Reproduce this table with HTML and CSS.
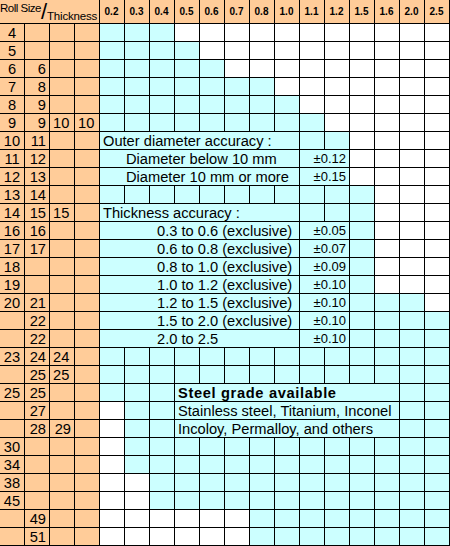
FILE: index.html
```html
<!DOCTYPE html>
<html lang="en">
<head>
<meta charset="utf-8">
<title>Roll size / thickness</title>
<link rel="stylesheet" href="styles.css">
</head>
<body>
<div class="sheet">
  <div class="corner"><span class="roll">Roll Size</span><span class="slash">/</span><span class="thick">Thickness</span></div>
  <div class="h">0.2</div><div class="h">0.3</div><div class="h">0.4</div><div class="h">0.5</div><div class="h">0.6</div><div class="h">0.7</div><div class="h">0.8</div><div class="h">1.0</div><div class="h">1.1</div><div class="h">1.2</div><div class="h">1.5</div><div class="h">1.6</div><div class="h">2.0</div><div class="h">2.5</div>

  <div class="o k1">4</div><div class="o"></div><div class="o"></div><div class="o"></div>
  <div class="c"></div><div class="c"></div><div class="c"></div><div class="w"></div><div class="w"></div><div class="w"></div><div class="w"></div><div class="w"></div><div class="w"></div><div class="w"></div><div class="w"></div><div class="w"></div><div class="w"></div><div class="w"></div>

  <div class="o k1">5</div><div class="o"></div><div class="o"></div><div class="o"></div>
  <div class="c"></div><div class="c"></div><div class="c"></div><div class="c"></div><div class="w"></div><div class="w"></div><div class="w"></div><div class="w"></div><div class="w"></div><div class="w"></div><div class="w"></div><div class="w"></div><div class="w"></div><div class="w"></div>

  <div class="o k1">6</div><div class="o k2">6</div><div class="o"></div><div class="o"></div>
  <div class="c"></div><div class="c"></div><div class="c"></div><div class="c"></div><div class="c"></div><div class="w"></div><div class="w"></div><div class="w"></div><div class="w"></div><div class="w"></div><div class="w"></div><div class="w"></div><div class="w"></div><div class="w"></div>

  <div class="o k1">7</div><div class="o k2">8</div><div class="o"></div><div class="o"></div>
  <div class="c"></div><div class="c"></div><div class="c"></div><div class="c"></div><div class="c"></div><div class="c"></div><div class="c"></div><div class="w"></div><div class="w"></div><div class="w"></div><div class="w"></div><div class="w"></div><div class="w"></div><div class="w"></div>

  <div class="o k1">8</div><div class="o k2">9</div><div class="o"></div><div class="o"></div>
  <div class="c"></div><div class="c"></div><div class="c"></div><div class="c"></div><div class="c"></div><div class="c"></div><div class="c"></div><div class="c"></div><div class="w"></div><div class="w"></div><div class="w"></div><div class="w"></div><div class="w"></div><div class="w"></div>

  <div class="o k1">9</div><div class="o k2">9</div><div class="o k3">10</div><div class="o k3">10</div>
  <div class="c"></div><div class="c"></div><div class="c"></div><div class="c"></div><div class="c"></div><div class="c"></div><div class="c"></div><div class="c"></div><div class="c"></div><div class="w"></div><div class="w"></div><div class="w"></div><div class="w"></div><div class="w"></div>

  <div class="o k1">10</div><div class="o k2">11</div><div class="o"></div><div class="o"></div>
  <div class="note">Outer diameter accuracy :</div><div class="c"></div><div class="c"></div><div class="w"></div><div class="w"></div><div class="w"></div><div class="w"></div>

  <div class="o k1">11</div><div class="o k2">12</div><div class="o"></div><div class="o"></div>
  <div class="note in1">Diameter below 10 mm</div><div class="val">±0.12</div><div class="w"></div><div class="w"></div><div class="w"></div><div class="w"></div>

  <div class="o k1">12</div><div class="o k2">13</div><div class="o"></div><div class="o"></div>
  <div class="note in1">Diameter 10 mm or more</div><div class="val">±0.15</div><div class="w"></div><div class="w"></div><div class="w"></div><div class="w"></div>

  <div class="o k1">13</div><div class="o k2">14</div><div class="o"></div><div class="o"></div>
  <div class="c"></div><div class="c"></div><div class="c"></div><div class="c"></div><div class="c"></div><div class="c"></div><div class="c"></div><div class="c"></div><div class="c"></div><div class="c"></div><div class="c"></div><div class="w"></div><div class="w"></div><div class="w"></div>

  <div class="o k1">14</div><div class="o k2">15</div><div class="o k3">15</div><div class="o"></div>
  <div class="note">Thickness accuracy :</div><div class="c"></div><div class="c"></div><div class="c"></div><div class="w"></div><div class="w"></div><div class="w"></div>

  <div class="o k1">16</div><div class="o k2">16</div><div class="o"></div><div class="o"></div>
  <div class="note in2">0.3 to 0.6 (exclusive)</div><div class="val">±0.05</div><div class="c"></div><div class="w"></div><div class="w"></div><div class="w"></div>

  <div class="o k1">17</div><div class="o k2">17</div><div class="o"></div><div class="o"></div>
  <div class="note in2">0.6 to 0.8 (exclusive)</div><div class="val">±0.07</div><div class="c"></div><div class="w"></div><div class="w"></div><div class="w"></div>

  <div class="o k1">18</div><div class="o"></div><div class="o"></div><div class="o"></div>
  <div class="note in2">0.8 to 1.0 (exclusive)</div><div class="val">±0.09</div><div class="c"></div><div class="w"></div><div class="w"></div><div class="w"></div>

  <div class="o k1">19</div><div class="o"></div><div class="o"></div><div class="o"></div>
  <div class="note in2">1.0 to 1.2 (exclusive)</div><div class="val">±0.10</div><div class="c"></div><div class="w"></div><div class="w"></div><div class="w"></div>

  <div class="o k1">20</div><div class="o k2">21</div><div class="o"></div><div class="o"></div>
  <div class="note in2">1.2 to 1.5 (exclusive)</div><div class="val">±0.10</div><div class="c"></div><div class="c"></div><div class="c"></div><div class="w"></div>

  <div class="o"></div><div class="o k2">22</div><div class="o"></div><div class="o"></div>
  <div class="note in2">1.5 to 2.0 (exclusive)</div><div class="val">±0.10</div><div class="c"></div><div class="c"></div><div class="c"></div><div class="c"></div>

  <div class="o"></div><div class="o k2">22</div><div class="o"></div><div class="o"></div>
  <div class="note in2">2.0 to 2.5</div><div class="val">±0.10</div><div class="c"></div><div class="c"></div><div class="c"></div><div class="c"></div>

  <div class="o k1">23</div><div class="o k2">24</div><div class="o k3">24</div><div class="o"></div>
  <div class="c"></div><div class="c"></div><div class="c"></div><div class="c"></div><div class="c"></div><div class="c"></div><div class="c"></div><div class="c"></div><div class="c"></div><div class="c"></div><div class="c"></div><div class="c"></div><div class="c"></div><div class="c"></div>

  <div class="o"></div><div class="o k2">25</div><div class="o k3">25</div><div class="o"></div>
  <div class="c"></div><div class="c"></div><div class="c"></div><div class="c"></div><div class="c"></div><div class="c"></div><div class="c"></div><div class="c"></div><div class="c"></div><div class="c"></div><div class="c"></div><div class="c"></div><div class="c"></div><div class="c"></div>

  <div class="o k1">25</div><div class="o k2">25</div><div class="o"></div><div class="o"></div>
  <div class="c"></div><div class="c"></div><div class="c"></div><div class="grade bold">Steel grade available</div><div class="c"></div><div class="c"></div>

  <div class="o"></div><div class="o k2">27</div><div class="o"></div><div class="o"></div>
  <div class="w"></div><div class="c"></div><div class="c"></div><div class="grade">Stainless steel, Titanium, Inconel</div><div class="c"></div><div class="c"></div>

  <div class="o"></div><div class="o k2">28</div><div class="o rt">29</div><div class="o"></div>
  <div class="w"></div><div class="c"></div><div class="c"></div><div class="grade">Incoloy, Permalloy, and others</div><div class="c"></div><div class="c"></div>

  <div class="o k1">30</div><div class="o"></div><div class="o"></div><div class="o"></div>
  <div class="w"></div><div class="c"></div><div class="c"></div><div class="c"></div><div class="c"></div><div class="c"></div><div class="c"></div><div class="c"></div><div class="c"></div><div class="c"></div><div class="c"></div><div class="c"></div><div class="c"></div><div class="c"></div>

  <div class="o k1">34</div><div class="o"></div><div class="o"></div><div class="o"></div>
  <div class="w"></div><div class="c"></div><div class="c"></div><div class="c"></div><div class="c"></div><div class="c"></div><div class="c"></div><div class="c"></div><div class="c"></div><div class="c"></div><div class="c"></div><div class="c"></div><div class="c"></div><div class="c"></div>

  <div class="o k1">38</div><div class="o"></div><div class="o"></div><div class="o"></div>
  <div class="w"></div><div class="w"></div><div class="c"></div><div class="c"></div><div class="c"></div><div class="c"></div><div class="c"></div><div class="c"></div><div class="c"></div><div class="c"></div><div class="c"></div><div class="c"></div><div class="c"></div><div class="c"></div>

  <div class="o k1">45</div><div class="o"></div><div class="o"></div><div class="o"></div>
  <div class="w"></div><div class="w"></div><div class="c"></div><div class="c"></div><div class="c"></div><div class="c"></div><div class="c"></div><div class="c"></div><div class="c"></div><div class="c"></div><div class="c"></div><div class="c"></div><div class="c"></div><div class="c"></div>

  <div class="o"></div><div class="o k2">49</div><div class="o"></div><div class="o"></div>
  <div class="w"></div><div class="w"></div><div class="w"></div><div class="w"></div><div class="w"></div><div class="w"></div><div class="c"></div><div class="c"></div><div class="c"></div><div class="c"></div><div class="c"></div><div class="c"></div><div class="c"></div><div class="c"></div>

  <div class="o"></div><div class="o k2">51</div><div class="o"></div><div class="o"></div>
  <div class="w"></div><div class="w"></div><div class="w"></div><div class="w"></div><div class="w"></div><div class="w"></div><div class="c"></div><div class="c"></div><div class="c"></div><div class="c"></div><div class="c"></div><div class="c"></div><div class="c"></div><div class="c"></div>
</div>
</body>
</html>
```

FILE: styles.css
```css
* { box-sizing: border-box; }

html, body {
  margin: 0;
  padding: 0;
  background: #ffffff;
}

body {
  font-family: "Liberation Sans", Arial, sans-serif;
  color: #000000;
}

.sheet {
  display: grid;
  grid-template-columns: repeat(18, 24px);
  grid-template-rows: 23px repeat(29, 17px);
  gap: 1px;
  width: 450px;
  padding: 0 1px 1px 0;
  background: #000000;
  font-size: 14.67px;
  line-height: 16px;
}

:where(.sheet > div) {
  overflow: hidden;
  white-space: nowrap;
  padding-top: 1px;
}

.o { background: #ffcc99; }
.c { background: #ccffff; }
.w { background: #ffffff; }

.k1 { text-align: center; }
.k2 { text-align: right; padding-right: 3px; }
.k3 { text-align: left; padding-left: 3px; }
.rt { text-align: right; padding-right: 3px; }

.corner {
  grid-column: span 4;
  background: #ffcc99;
  display: flex;
}

.roll {
  align-self: flex-start;
  font-size: 11.5px;
  line-height: 11px;
  letter-spacing: -0.5px;
  margin-top: 2px;
}

.slash {
  align-self: flex-start;
  font-size: 22px;
  line-height: 22px;
}

.thick {
  align-self: flex-end;
  font-size: 11.5px;
  line-height: 11px;
  letter-spacing: -0.2px;
  margin-bottom: 1px;
}

.h {
  background: #ffcc99;
  font-weight: bold;
  font-size: 10px;
  line-height: 10px;
  padding-top: 7px;
  padding-right: 1px;
  text-align: center;
}

.note {
  grid-column: span 8;
  background: #ccffff;
  padding-left: 3px;
}

.in1 { padding-left: 26px; }
.in2 { padding-left: 57px; }

.val {
  grid-column: span 2;
  background: #ccffff;
  text-align: right;
  padding-right: 3px;
  font-size: 13px;
}

.grade {
  grid-column: span 9;
  background: #ccffff;
  padding-left: 3px;
}

.bold {
  font-weight: bold;
  letter-spacing: 0.65px;
}
```
